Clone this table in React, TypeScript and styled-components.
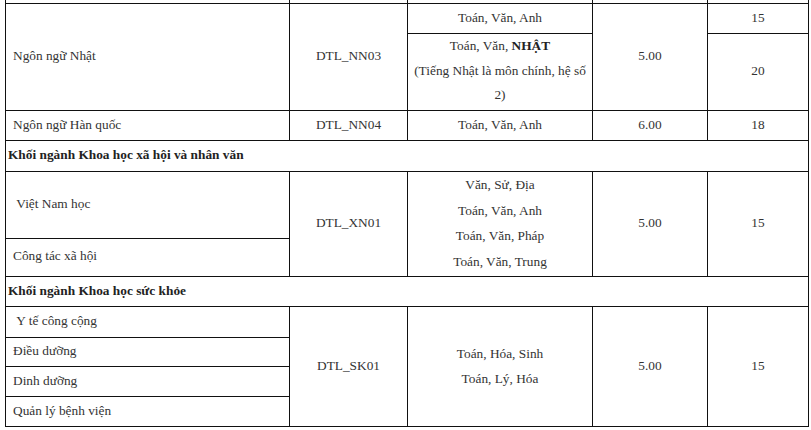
import React from "react";
import styled, { createGlobalStyle } from "styled-components";

const GlobalStyle = createGlobalStyle`
  html, body {
    margin: 0;
    padding: 0;
    background: #fff;
  }
  body {
    font-family: "Liberation Serif", "Times New Roman", serif;
    font-size: 13.33px;
    color: #333;
  }
`;

const Page = styled.div`
  padding: 0 0 0 5px;
  height: 430px;
  overflow: hidden;
`;

const Table = styled.table`
  border-collapse: collapse;
  table-layout: fixed;
  width: 803px;
  margin-top: -27px;
  line-height: 24px;
`;

const Row = styled.tr<{ $h: number }>`
  height: ${(p) => p.$h}px;
`;

const Cell = styled.td<{ $left?: boolean }>`
  border: 1px solid #111;
  padding: 0 ${(p) => (p.$left ? "7px" : "4px")} 2px;
  text-align: ${(p) => (p.$left ? "left" : "center")};
  vertical-align: middle;
  white-space: nowrap;
`;

const GroupCell = styled.td`
  border: 1px solid #111;
  padding: 0 2px 2px;
  font-weight: bold;
  color: #222;
  text-align: left;
  vertical-align: middle;
`;

const Lines = styled.div<{ $lh: number }>`
  line-height: ${(p) => p.$lh}px;
`;

const Strong = styled.b`
  color: #222;
`;

const widths = [284, 118, 185, 115, 101];

export default function App() {
  return (
    <>
      <GlobalStyle />
      <Page>
        <Table>
          <colgroup>
            {widths.map((w, i) => (
              <col key={i} style={{ width: w }} />
            ))}
          </colgroup>
          <tbody>
            {/* row above the visible part, only its borders peek in */}
            <Row $h={30}>
              <Cell $left />
              <Cell />
              <Cell />
              <Cell />
              <Cell />
            </Row>
            <Row $h={30}>
              <Cell $left rowSpan={2}>
                Ngôn ngữ Nhật
              </Cell>
              <Cell rowSpan={2}>DTL_NN03</Cell>
              <Cell>Toán, Văn, Anh</Cell>
              <Cell rowSpan={2}>5.00</Cell>
              <Cell>15</Cell>
            </Row>
            <Row $h={77}>
              <Cell>
                <Lines $lh={24.5}>
                  <div>
                    Toán, Văn, <Strong>NHẬT</Strong>
                  </div>
                  <div>(Tiếng Nhật là môn chính, hệ số</div>
                  <div>2)</div>
                </Lines>
              </Cell>
              <Cell>20</Cell>
            </Row>
            <Row $h={30}>
              <Cell $left>Ngôn ngữ Hàn quốc</Cell>
              <Cell>DTL_NN04</Cell>
              <Cell>Toán, Văn, Anh</Cell>
              <Cell>6.00</Cell>
              <Cell>18</Cell>
            </Row>
            <Row $h={31}>
              <GroupCell colSpan={5}>Khối ngành Khoa học xã hội và nhân văn</GroupCell>
            </Row>
            <Row $h={66}>
              <Cell $left>&nbsp;Việt Nam học</Cell>
              <Cell rowSpan={2}>DTL_XN01</Cell>
              <Cell rowSpan={2}>
                <Lines $lh={25.5}>
                  <div>Văn, Sử, Địa</div>
                  <div>Toán, Văn, Anh</div>
                  <div>Toán, Văn, Pháp</div>
                  <div>Toán, Văn, Trung</div>
                </Lines>
              </Cell>
              <Cell rowSpan={2}>5.00</Cell>
              <Cell rowSpan={2}>15</Cell>
            </Row>
            <Row $h={38}>
              <Cell $left>Công tác xã hội</Cell>
            </Row>
            <Row $h={30}>
              <GroupCell colSpan={5}>Khối ngành Khoa học sức khỏe</GroupCell>
            </Row>
            <Row $h={31}>
              <Cell $left>&nbsp;Y tế công cộng</Cell>
              <Cell rowSpan={4}>DTL_SK01</Cell>
              <Cell rowSpan={4}>
                <Lines $lh={25}>
                  <div>Toán, Hóa, Sinh</div>
                  <div>Toán, Lý, Hóa</div>
                </Lines>
              </Cell>
              <Cell rowSpan={4}>5.00</Cell>
              <Cell rowSpan={4}>15</Cell>
            </Row>
            <Row $h={29}>
              <Cell $left>Điều dưỡng</Cell>
            </Row>
            <Row $h={30}>
              <Cell $left>Dinh dưỡng</Cell>
            </Row>
            <Row $h={30}>
              <Cell $left>Quản lý bệnh viện</Cell>
            </Row>
          </tbody>
        </Table>
      </Page>
    </>
  );
}
